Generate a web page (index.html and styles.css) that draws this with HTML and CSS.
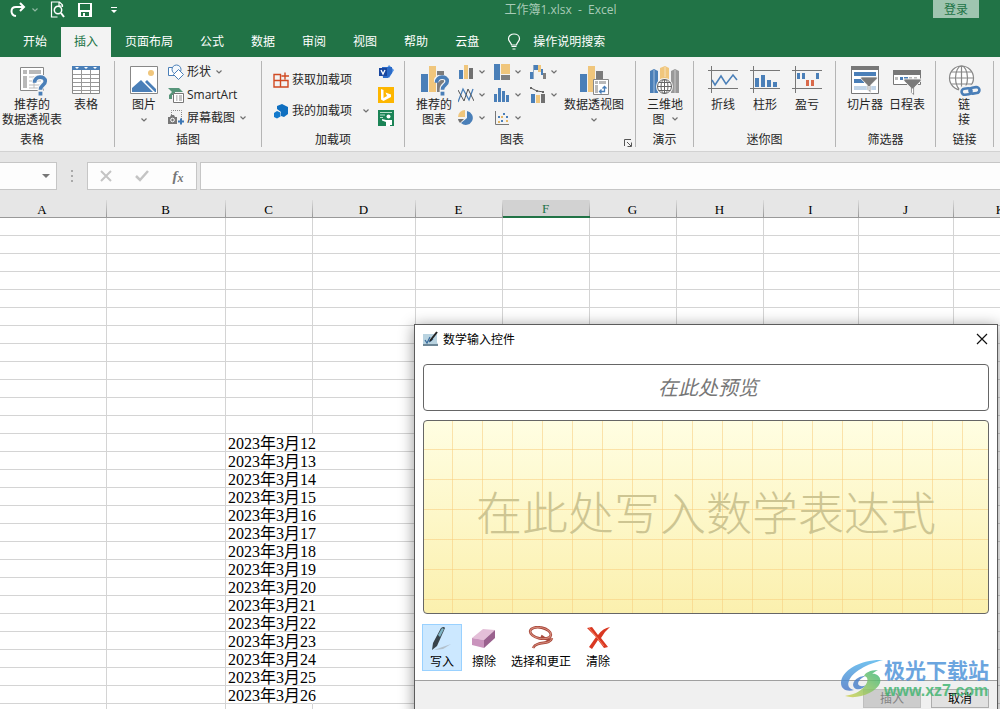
FILE: index.html
```html
<!DOCTYPE html>
<html lang="zh-CN">
<head>
<meta charset="utf-8">
<title>工作簿1.xlsx - Excel</title>
<link rel="stylesheet" href="styles.css">
</head>
<body>
<svg class="defs" aria-hidden="true">
  <symbol id="chev" viewBox="0 0 6 4"><path d="M.5.5 3 3 5.5.5" fill="none" stroke="currentColor" stroke-width="1.2"/></symbol>
  <symbol id="bars" viewBox="0 0 30 32"><path fill="#4a7fb8" d="M1 10h7v18H1z"/><path fill="#f0c67c" d="M9 2h7v26H9z"/><path fill="#7c7c7c" d="M17 7h7v21h-7z"/></symbol>
  <symbol id="question" viewBox="0 0 16 22"><path d="M2 7.500c0-7 11.500-7 11.500-1 0 4-5 4-5 8.500v6" fill="none" stroke="#f3f3f3" stroke-width="6"/><path d="M2.300 8c0-7.500 11.200-7.500 11.200-1.500 0 4.500-5 4-5 9" fill="none" stroke="#4a7fb8" stroke-width="3.800"/><path fill="#4a7fb8" d="M6.500 17.500h4v4h-4z"/></symbol>
  <symbol id="funnel" viewBox="0 0 20 20"><path d="M1 1h18v2l-7 7v9l-4-4v-5L1 3z" fill="#7a7a7a" stroke="#f3f3f3"/><path d="M10 11v5" stroke="#fff" stroke-width="1.500"/></symbol>
</svg>

<header class="top">
  <div class="titlebar">
    <div class="quick">
      <button aria-label="恢复"><svg width="16" height="16" viewBox="0 0 16 16"><path d="M6 14C0 13 0 5 6 5h8M10 1l4 4-4 4" fill="none" stroke="#fff" stroke-width="2"/></svg></button>
      <button class="dim" aria-label="恢复选项"><svg width="6" height="4"><use href="#chev"/></svg></button>
      <button aria-label="打印预览"><svg width="16" height="18" viewBox="0 0 16 18"><path d="M12.500 6V4l-3-3h-8v15h6M9 1v4h3.500" fill="none" stroke="#fff" stroke-width="1.200"/><circle cx="8" cy="9" r="3.700" fill="none" stroke="#fff" stroke-width="1.500"/><path d="m11 12 3 4" stroke="#fff" stroke-width="2"/></svg></button>
      <button aria-label="保存"><svg width="14" height="14" viewBox="0 0 14 14"><path d="M0 0h14v14H0zM2 1v6h10V1zM3 9v4h2v-3h2v3h4V9z" fill="#fff" fill-rule="evenodd"/></svg></button>
      <button aria-label="自定义快速访问工具栏"><svg width="6" height="7" viewBox="0 0 6 7"><path d="M0 0h6v1H0zM0 3h6L3 6z" fill="#fff"/></svg></button>
    </div>
    <div class="doc">工作簿1.xlsx &nbsp;-&nbsp; Excel</div>
    <button class="login">登录</button>
  </div>
  <nav class="tabs">
    <button>开始</button><button class="active">插入</button><button>页面布局</button><button>公式</button><button>数据</button><button>审阅</button><button>视图</button><button>帮助</button><button>云盘</button>
    <button class="tell"><svg width="14" height="17" viewBox="0 0 14 17"><path d="M4.500 12C4 9 1.500 8.500 1.500 5.800c0-6.400 11-6.400 11 0C12.500 8.500 10 9 9.500 12zM4.500 13.500h5M5.500 16h3" fill="none" stroke="#fff" stroke-width="1.200"/></svg>操作说明搜索</button>
  </nav>
</header>

<section class="ribbon">
  <div class="group g-table">
    <div class="tools">
      <button class="big w64"><svg width="32" height="32" viewBox="0 0 32 32"><path d="M4.500 3.500h23v23h-23z" fill="#fff" stroke="#888"/><path d="M7 6h4v4H7zM13 6h12v4H13zM7 12h4v12H7z" fill="#b9b9b9"/><path d="M13 13h12M13 17h12M13 21h12M13 24h12M18 12v12" stroke="#bbb"/><use href="#question" x="16" y="11" width="16" height="21"/></svg>推荐的<br>数据透视表</button>
      <button class="big w44"><svg width="32" height="32" viewBox="0 0 32 32"><path d="M2.500 2.500h27v27h-27z" fill="#fff" stroke="#888"/><path d="M2 2h28v4H2z" fill="#4a7fb8"/><path d="M3 10.500h26M3 14.500h26M3 18.500h26M3 22.500h26M3 26.500h26M11.500 6v23M20.500 6v23" stroke="#999"/><path d="M5 3h4L7 5zM14 3h4l-2 2zM23 3h4l-2 2z" fill="#fff"/></svg>表格</button>
    </div>
    <div class="name">表格</div>
  </div>
  <div class="group g-illus">
    <div class="tools">
      <button class="big w44"><svg width="32" height="32" viewBox="0 0 32 32"><path d="M2.500 2.500h27v27h-27z" fill="#fff" stroke="#888"/><circle cx="23" cy="9" r="3" fill="#f0c67c"/><path d="M4 28V24l9-8 12 12zM17 18l2-2 9 9v3h-1z" fill="#4a7fb8"/></svg>图片<svg class="drop" width="6" height="4"><use href="#chev"/></svg></button>
      <div class="stack">
        <button class="row"><svg width="16" height="16" viewBox="0 0 16 16"><path d="M.5 3.500h8v8h-8z" fill="#fff" stroke="#4a7fb8"/><circle cx="8.500" cy="5.500" r="4.500" fill="#f3f8fd" stroke="#4a7fb8"/><path d="m10.500 5.500 5 5-5 5-5-5z" fill="#fff" stroke="#4a7fb8"/></svg>形状<svg class="chev" width="6" height="4"><use href="#chev"/></svg></button>
        <button class="row"><svg width="16" height="16" viewBox="0 0 16 16"><path d="M0 1h11l4 4H7v3H4v4H1V8l3-3z" fill="#57957a"/><path d="M5.500 6.500h10v9h-10z" fill="#fff" stroke="#777"/><path d="M8 9h1.500M11 9h3M8 11h1.500M11 11h3M8 13h1.500M11 13h3" stroke="#888"/></svg>SmartArt</button>
        <button class="row"><svg width="16" height="16" viewBox="0 0 16 16"><path d="M3.500 5V.5h10V9" fill="none" stroke="#888" stroke-dasharray="1 1"/><path d="M0 7h2l1-2h3l1 2h2v7H0z" fill="#777"/><circle cx="4.500" cy="10" r="1.800" fill="none" stroke="#fff"/><path d="M10 11.500h6M13 8.500v6" stroke="#3e78b5" stroke-width="2"/></svg>屏幕截图<svg class="chev" width="6" height="4"><use href="#chev"/></svg></button>
      </div>
    </div>
    <div class="name">插图</div>
  </div>
  <div class="group g-addin">
    <div class="tools">
      <div class="stack addins">
        <button class="row"><svg width="16" height="16" viewBox="0 0 16 16"><path d="M1 2.500h6.500v12.500H1zM1 8.500h14V15H7.500M12 .500v7M8.500 4H16" fill="none" stroke="#d04a22" stroke-width="1.400"/></svg>获取加载项</button>
        <button class="row"><svg width="16" height="16" viewBox="0 0 16 16"><path d="m9 1 6 3v7l-4 3-3-1V9L4 6V3z" fill="#0f6fc0"/><path d="m4 8 3.500 1.500v4L4 15.500 1 14v-4z" fill="#1279cc"/></svg>我的加载项<svg class="chev far" width="6" height="4"><use href="#chev"/></svg></button>
      </div>
      <div class="stack">
        <button class="row" aria-label="Visio"><svg width="16" height="16" viewBox="0 0 16 16"><path d="m11 1 5 5-5 8-5-6z" fill="#4f8ee0"/><path d="M4 3h10v6l-4 5H5z" fill="#2b6bc8"/><path d="M1 4h8v8H1z" fill="#1847a0"/><path d="m3 6 2 4 2-4" fill="none" stroke="#fff" stroke-width="1.300"/></svg></button>
        <button class="row" aria-label="必应地图"><svg width="16" height="16" viewBox="0 0 16 16"><path d="M0 0h16v16H0z" fill="#fdb600"/><path d="m3 2 2.500 1v8l3.500-2-1.500-3.500L13 7.500v2.500l-7.500 4L3 12.500z" fill="#fff"/></svg></button>
        <button class="row" aria-label="人物图"><svg width="16" height="16" viewBox="0 0 16 16"><path d="M0 0h16v16H0z" fill="#1b8456"/><path d="M2 2.500h12M2 5h5M2 7.500h3" stroke="#b8e0cb"/><circle cx="10.500" cy="6.500" r="2" fill="#fff"/><path d="m4 9 4 1h6v5h-2v1H8v-4L4 10.500z" fill="#fff"/></svg></button>
      </div>
    </div>
    <div class="name">加载项</div>
  </div>
  <div class="group g-chart">
    <div class="tools">
      <button class="big w44"><svg width="32" height="32" viewBox="0 0 32 32"><use href="#bars" x="2" y="0" width="30" height="32"/><use href="#question" x="16" y="11" width="16" height="21"/></svg>推荐的<br>图表</button>
      <div class="minis">
        <button aria-label="柱形图"><svg width="16" height="16" viewBox="0 0 16 16"><path d="M1 6h4v9H1z" fill="#4a7fb8"/><path d="M6 1h4v14H6z" fill="#f0c67c"/><path d="M11 4h4v11h-4z" fill="#707070"/></svg><svg width="6" height="4"><use href="#chev"/></svg></button>
        <button aria-label="层次结构图"><svg width="16" height="16" viewBox="0 0 16 16"><path d="M0 0h6v16H0z" fill="#4a7fb8"/><path d="M7 0h9v10H7z" fill="#f0c67c"/><path d="M7 11h9v5H7z" fill="#808080"/></svg><svg width="6" height="4"><use href="#chev"/></svg></button>
        <button aria-label="瀑布图"><svg width="16" height="16" viewBox="0 0 16 16"><path d="M0 8h3v7H0zM4 1h4v5H4z" fill="#4a7fb8"/><path d="M8 1h3v7H8z" fill="#f0c67c"/><path d="M3 1h1v14H3z" fill="#8fa9c4"/><path d="M11 5h2v6h-2z" fill="#4a7fb8"/><path d="M13 9h3v6h-3z" fill="#808080"/></svg><svg width="6" height="4"><use href="#chev"/></svg></button>
        <button aria-label="折线图"><svg width="16" height="16" viewBox="0 0 16 16"><path d="M0 15 5 2l6 11 4-11" fill="none" stroke="#4a7fb8" stroke-width="1.300"/><path d="m0 3 6 11 4-12 6 12" fill="none" stroke="#555"/></svg><svg width="6" height="4"><use href="#chev"/></svg></button>
        <button aria-label="统计图"><svg width="16" height="16" viewBox="0 0 16 16"><path d="M0 7h3v8H0zM4 1h3v14H4zM8 4h3v11H8zM12 8h3v7h-3z" fill="#4a7fb8"/></svg><svg width="6" height="4"><use href="#chev"/></svg></button>
        <button aria-label="组合图"><svg width="16" height="16" viewBox="0 0 16 16"><path d="M1 7h4v9H1z" fill="#4a7fb8"/><path d="M6 8h4v8H6z" fill="#f0c67c"/><path d="M11 7h4v9h-4z" fill="#707070"/><path d="m1 1 6 3 7 1" fill="none" stroke="#555"/><path d="M0 0h2v2H0zM6 3h2v2H6zM12 4h2v2h-2z" fill="#666"/></svg><svg width="6" height="4"><use href="#chev"/></svg></button>
        <button aria-label="饼图"><svg width="16" height="16" viewBox="0 0 16 16"><path d="M9 1a7 7 0 1 1-6 12l6-5z" fill="#4a7fb8"/><path d="M7 0v7H0a7 7 0 0 1 7-7z" fill="#f0c67c"/><path d="M0 9h6l-4 4a7 7 0 0 1-2-4z" fill="#707070"/></svg><svg width="6" height="4"><use href="#chev"/></svg></button>
        <button aria-label="散点图"><svg width="16" height="16" viewBox="0 0 16 16"><path d="M1.500 1v13.500H15" fill="none" stroke="#777"/><path d="M4 6h2v2H4zM9 3h2v2H9zM7 10h2v2H7zM12 6h2v2h-2z" fill="#4a7fb8"/><path d="M4 11h2v2H4zM7 6h2v2H7zM12 10h2v2h-2z" fill="#e5b765"/></svg><svg width="6" height="4"><use href="#chev"/></svg></button>
      </div>
      <button class="big w64 pivot"><svg width="32" height="32" viewBox="0 0 32 32"><use href="#bars" x="1" y="0" width="30" height="32"/><path d="M15.500 15.500h15v15h-15z" fill="#fff" stroke="#888"/><path d="M17 17h3v3h-3zM21 17h7v3h-7zM17 21h3v8h-3z" fill="#b9b9b9"/><path d="M21.500 27.500h5v-5M23.500 25.500l-2 2 2 2M24.500 24.500l2-2 2 2" fill="none" stroke="#4a7fb8" stroke-width="1.300"/></svg>数据透视图<svg class="drop" width="6" height="4"><use href="#chev"/></svg></button>
    </div>
    <div class="name">图表</div>
    <button class="launch" aria-label="查看所有图表"><svg width="8" height="8" viewBox="0 0 8 8"><path d="M.5 7V.5H7M3 3l4 4M7.500 3.500v4h-4" fill="none" stroke="#555"/></svg></button>
  </div>
  <div class="group g-map">
    <div class="tools">
      <button class="big w44"><svg width="32" height="32" viewBox="0 0 32 32"><path d="m1 7 4-2 4 2v22H1z" fill="#4a7fb8"/><path d="m11 4 5-2 4 2v20h-9z" fill="#f0c67c"/><path d="m22 7 4-2 4 2v22h-8z" fill="#999"/><path d="M5 6v23M26 6v23M16 3v10" stroke="#fff" opacity=".5"/><circle cx="15.500" cy="22.500" r="8.500" fill="#f3f3f3"/><g fill="#fff" stroke="#666"><circle cx="15.500" cy="22.500" r="7"/><ellipse cx="15.500" cy="22.500" rx="3.500" ry="7"/><path d="M8 22.500h15M9.500 18.500h12M9.500 26.500h12M15.500 15v15" fill="none"/></g></svg>三维地<br>图 <svg class="chev" width="6" height="4"><use href="#chev"/></svg></button>
    </div>
    <div class="name">演示</div>
  </div>
  <div class="group g-spark">
    <div class="tools">
      <button class="big w42"><svg width="32" height="32" viewBox="0 0 32 32"><path d="M4.500 2v27M1 6.500h30M1 24.500h30" stroke="#777"/><path d="m5 16 3 5 6-9 5 8 7-9 4 5" fill="none" stroke="#4a7fb8" stroke-width="1.500"/></svg>折线</button>
      <button class="big w42"><svg width="32" height="32" viewBox="0 0 32 32"><path d="M4.500 2v27M1 6.500h30M1 24.500h30" stroke="#777"/><path d="M6 14h4v9H6zM12 11h4v12h-4zM18 16h4v7h-4zM24 18h4v5h-4z" fill="#4a7fb8"/></svg>柱形</button>
      <button class="big w42"><svg width="32" height="32" viewBox="0 0 32 32"><path d="M4.500 2v27M1 6.500h30M1 24.500h30" stroke="#777"/><path d="M6 9h3v6H6zM11 9h3v6h-3zM25 9h3v6h-3z" fill="#4a7fb8"/><path d="M15 16h3v6h-3zM20 16h3v6h-3z" fill="#d9694a"/></svg>盈亏</button>
    </div>
    <div class="name">迷你图</div>
  </div>
  <div class="group g-filter">
    <div class="tools">
      <button class="big w42"><svg width="32" height="32" viewBox="0 0 32 32"><path d="M2.500 2.500h27v27h-27z" fill="#fff" stroke="#777"/><path d="M2 2h28v4H2z" fill="#777"/><path d="M5 8h22v4H5zM5 15h10v4H5z" fill="#4a7fb8"/><path d="M5 22h22v4H5z" fill="#c0d4e8"/><use href="#funnel" x="11" y="12" width="18" height="18"/></svg>切片器</button>
      <button class="big w42"><svg width="32" height="32" viewBox="0 0 32 32"><path d="M2.500 6.500h27v14h-27z" fill="#fff" stroke="#777"/><path d="M2 6h28v5H2z" fill="#777"/><path d="M4 13h3v3H4zM18 13h3v3h-3zM23 13h3v3h-3z" fill="#bbb"/><path d="M9 13h3v3H9zM13 13h4v3h-4z" fill="#4a7fb8"/><use href="#funnel" x="12" y="14" width="19" height="19"/></svg>日程表</button>
    </div>
    <div class="name">筛选器</div>
  </div>
  <div class="group g-link">
    <div class="tools">
      <button class="big w42"><svg width="32" height="32" viewBox="0 0 32 32"><g fill="none" stroke="#888" stroke-width="1.200"><circle cx="13.500" cy="14" r="12" fill="#fff"/><ellipse cx="13.500" cy="14" rx="6" ry="12"/><path d="M1.500 14h24M3.500 8h20M3.500 20h20M13.500 2v24"/></g><g transform="rotate(-8 22 27)" fill="none"><g stroke="#f3f3f3" stroke-width="6"><rect x="13.500" y="24" width="10" height="6" rx="3"/><rect x="21.500" y="24" width="10" height="6" rx="3"/></g><g stroke="#4a7fb8" stroke-width="2.600"><rect x="13.500" y="24" width="10" height="6" rx="3"/><rect x="21.500" y="24" width="10" height="6" rx="3"/></g></g></svg>链<br>接</button>
    </div>
    <div class="name">链接</div>
  </div>
</section>

<section class="formula">
  <button class="namebox" aria-label="名称框"><svg width="8" height="5" viewBox="0 0 8 5"><path d="M0 0h8L4 4z" fill="#777"/></svg></button>
  <svg class="dots" width="2" height="12" viewBox="0 0 2 12"><path d="M0 0h2v2H0zM0 5h2v2H0zM0 10h2v2H0z" fill="#aaa"/></svg>
  <div class="fxbox">
    <button aria-label="取消"><svg width="12" height="12" viewBox="0 0 12 12"><path d="m1 1 10 10M11 1 1 11" stroke="#c4c4c4" stroke-width="2"/></svg></button>
    <button aria-label="输入"><svg width="14" height="12" viewBox="0 0 14 12"><path d="m1 6 4 4 8-9" fill="none" stroke="#c4c4c4" stroke-width="2.500"/></svg></button>
    <button class="fx" aria-label="插入函数"><i>f</i><i class="x">x</i></button>
  </div>
  <input class="fbar" type="text" aria-label="编辑栏">
</section>

<main class="sheet">
  <table class="grid">
    <colgroup><col class="c128"><col class="c119"><col class="c87"><col class="c103"><col class="c87"><col class="c87"><col class="c87"><col class="c87"><col class="c95"><col class="c95"><col class="c95"></colgroup>
    <thead><tr><th>A</th><th>B</th><th>C</th><th>D</th><th>E</th><th class="sel">F</th><th>G</th><th>H</th><th>I</th><th>J</th><th>K</th></tr></thead>
    <tbody id="rows"></tbody>
  </table>
</main>

<div class="dialog" role="dialog" aria-labelledby="dlg-title">
  <div class="caption">
    <svg width="17" height="16" viewBox="0 0 17 16"><path d="M1 3h11l4 11H1z" fill="#9dbccd"/><path d="M1 3h14v10H1z" fill="#b9d3e0"/><path d="M1 13h15v2H1z" fill="#6d8797"/><path d="m3 9 2 3 3-6M7 11l4-3" fill="none" stroke="#36699a" stroke-width="1.200"/><path d="m8 10 7-9" stroke="#222" stroke-width="2"/></svg>
    <h1 id="dlg-title">数学输入控件</h1>
    <button aria-label="关闭"><svg width="12" height="12" viewBox="0 0 12 12"><path d="m1 1 10 10M11 1 1 11" stroke="#111" stroke-width="1.200"/></svg></button>
  </div>
  <div class="preview">在此处预览</div>
  <div class="canvas">在此处写入数学表达式</div>
  <div class="modes">
    <button class="on"><svg width="26" height="26" viewBox="0 0 26 26"><path d="m5 24 17-6-8 5z" fill="#999" opacity=".5"/><path d="m4 17 8-15q3-2 4 0L8 20l-5 4z" fill="#38434a"/><path d="m9 9 4-7 2 1-4 8z" fill="#7eb4c5"/></svg>写入</button>
    <button><svg width="26" height="26" viewBox="0 0 26 26"><path d="m1 12 11-9 12 1-11 10z" fill="#e4bfd8"/><path d="m1 12 12 2v8L1 19z" fill="#ca94bd"/><path d="m13 14 11-10v8L13 22z" fill="#9a618e"/></svg>擦除</button>
    <button class="wide"><svg width="26" height="26" viewBox="0 0 26 26"><g fill="none" stroke="#a8493c" stroke-width="2.600"><ellipse cx="12.500" cy="7" rx="10.500" ry="5.500" transform="rotate(12 12.500 7)"/><path d="M24 13c-4 3-7-1-11-3M24 12c-2 6-9 4-14 6-3 1-4 2-5 4"/></g><g fill="none" stroke="#d98e7e"><ellipse cx="12.500" cy="7" rx="10.500" ry="5.500" transform="rotate(12 12.500 7)"/><path d="M24 12c-2 6-9 4-14 6-3 1-4 2-5 4"/></g></svg>选择和更正</button>
    <button><svg width="26" height="26" viewBox="0 0 26 26"><path d="m2 2 5-1 6 8q5-7 12-8-5 4-9 11l7 9-4 1-6-8-6 9-3-2 7-10z" fill="#d93822"/><path d="m4 2 15 18" stroke="#f47b5c"/></svg>清除</button>
  </div>
  <div class="actions"><button disabled>插入</button><button>取消</button></div>
</div>

<div class="mark">
  <svg width="44" height="40" viewBox="0 0 44 40"><defs><linearGradient id="ma" x2="0" y2="1"><stop stop-color="#53b5ec"/><stop offset="1" stop-color="#4a78c8"/></linearGradient><linearGradient id="mb" x1="1" x2="0" y2="1"><stop stop-color="#35b67a"/><stop offset="1" stop-color="#d7d34f"/></linearGradient></defs><path d="M43 1C22 0 1 11 1 24c0 7 7 9 13 7-5-1-7-5-5-9C12 13 27 5 43 1z" fill="url(#ma)"/><path d="M25 17c-9 0-16 9-9 13 4 1 8-1 10-4-5 3-10 0-7-4 1-2 4-4 6-5z" fill="#477fca"/><path d="M24 17c7 1 3 12-8 17-5 2-9 2-11 3 12 4 31-3 35-13 2-7-5-10-8-9 2-2 4-3 6-4-8 0-13 3-14 6z" fill="url(#mb)"/></svg>
  <div class="words"><b>极光下载站</b><strong>www.xz7.com</strong></div>
</div>
<script src="rows.js"></script>
</body>
</html>
```
FILE: styles.css
```css
* { box-sizing: border-box; }
body {
  margin: 0;
  height: 100vh;
  overflow: hidden;
  position: relative;
  display: flex;
  flex-direction: column;
  background: #fff;
  color: #262626;
  font: 12px/15px "Open Sans", "Noto Sans CJK SC", sans-serif;
}
button { font: inherit; color: inherit; background: none; border: 0; padding: 0; margin: 0; }
svg { display: block; flex: none; }
.defs { position: absolute; width: 0; height: 0; }

.top { background: #217346; color: #fff; flex: none; }
.titlebar { display: grid; grid-template-columns: 1fr auto 1fr; height: 27px; align-items: start; }
.quick { display: flex; align-items: center; height: 20px; padding-left: 10px; }
.quick button { margin-right: 12px; }
.quick button:first-child { margin-right: 6px; }
.quick button:nth-child(4) { margin-right: 19px; }
.dim { opacity: .5; }
.doc { padding: 2px 0 0 121px; color: #a8cbb7; white-space: nowrap; }
.login { justify-self: end; width: 46px; height: 18px; margin-right: 21px; background: #9fc5b0; color: #217346; }
.tabs { display: flex; gap: 1px; padding-left: 10px; height: 30px; border-bottom: 1px solid #217346; }
.tabs button { padding: 0 13px; height: 28px; }
.tabs .active { background: #f3f3f3; color: #217346; height: 30px; padding-bottom: 2px; }
.tabs .tell { display: flex; align-items: center; gap: 12px; padding-left: 14px; }

.ribbon { display: flex; flex: none; height: 95px; padding: 4px 0; background: #f3f3f3; border-bottom: 1px solid #d2d2d2; overflow: hidden; }
.group { position: relative; flex: none; display: flex; flex-direction: column; border-right: 1px solid #b5b5b5; }
.tools { display: flex; height: 72px; align-items: flex-start; }
.name { text-align: center; }
.big { display: block; padding-top: 3px; white-space: nowrap; text-align: center; flex: none; }
.big > svg:first-child { margin: 0 auto 1px; overflow: visible; }
.big .drop { margin: 6px auto 0; }
.big .chev { display: inline-block; margin: 0 0 3px 4px; }
.drop, .chev, .minis svg:last-child { color: #707070; }
.w64 { width: 64px; }
.w44 { width: 44px; }
.w42 { width: 42px; }
.stack { display: flex; flex-direction: column; }
.row { display: flex; align-items: center; gap: 3px; height: 23px; white-space: nowrap; }
.row .chev { margin-left: 2px; }
.row .far { margin-left: 8px; }
.g-table { width: 165px; margin-left: -50px; padding-left: 50px; }
.g-table .name { margin-left: -50px; }
.g-illus { width: 147px; }
.g-illus .tools { padding-left: 7px; gap: 2px; }
.g-illus .stack, .g-addin .stack { margin-top: -1px; }
.g-addin { width: 143px; }
.g-addin .tools { padding-left: 11px; gap: 9px; }
.g-addin .addins { padding-top: 4px; }
.addins .row { height: 31px; }
.g-chart { width: 231px; }
.g-chart .tools { padding-left: 7px; gap: 2px; }
.g-chart .name { padding-right: 16px; }
.minis { display: grid; grid-template-columns: repeat(3, 36px); grid-auto-rows: 23px; margin-top: -1px; }
.minis button { display: flex; align-items: center; gap: 5px; }
.pivot { margin-left: -6px; }
.launch { position: absolute; right: 3px; bottom: 0; }
.g-map { width: 58px; }
.g-map .tools, .g-link .tools { padding-left: 7px; }
.g-spark { width: 142px; }
.g-spark .tools { padding-left: 8px; }
.g-filter { width: 100px; }
.g-filter .tools { padding-left: 8px; }
.g-link { width: 58px; }

.formula { display: flex; flex: none; align-items: center; height: 48px; background: #e6e6e6; }
.formula > button, .fxbox, .fbar { height: 28px; background: #fdfdfd; border: 1px solid #c6c6c6; }
.formula > .namebox { width: 57px; border-left: 0; display: flex; align-items: center; justify-content: flex-end; padding-right: 6px; }
.dots { margin: 0 14px; }
.fxbox { display: flex; align-items: center; width: 110px; margin-right: 3px; }
.fxbox button { flex: 1; display: flex; justify-content: center; align-items: center; }
.fxbox .fx { font: bold 15px/18px "Liberation Serif", serif; color: #777; }
.fx .x { font-size: 12px; padding-top: 4px; }
.fbar { flex: 1; min-width: 0; border-right: 0; padding: 0 6px; font: inherit; }

.sheet { flex: 1; min-height: 0; overflow: hidden; }
.grid { table-layout: fixed; width: 1070px; margin-left: -21px; border-spacing: 0; font-family: "Liberation Serif", "Noto Sans CJK SC", serif; color: #000; }
.c87 { width: 87px; }
.c95 { width: 95px; }
.c103 { width: 103px; }
.c119 { width: 119px; }
.c128 { width: 128px; }
.grid th { height: 18px; padding: 2px 2px 0 0; font-size: 13px; line-height: 15px; font-weight: normal; background: linear-gradient(#dcdcdc, #999) right / 1px 100% no-repeat #e6e6e6; border-bottom: 1px solid #999; }
.grid .sel { background-color: #d2d2d2; color: #217346; border-bottom: 2px solid #217346; line-height: 14px; }
.grid td { height: 18px; padding: 2px 0 0 2px; border-right: 1px solid #d4d4d4; border-bottom: 1px solid #d4d4d4; font-size: 16px; line-height: 15px; white-space: nowrap; overflow: visible; }
.grid .spill { border-right-color: transparent; }

.dialog { position: absolute; left: 414px; right: 2px; top: 324px; background: #fff; border: 1px solid #5c5c5c; box-shadow: 0 2px 14px rgba(0, 0, 0, .42); color: #000; }
.caption { display: flex; align-items: center; gap: 4px; height: 28px; margin-bottom: 11px; padding: 0 9px 0 7px; }
.caption h1 { flex: 1; margin: 0; font: inherit; }
.preview, .canvas { margin: 0 8px; border: 1px solid #666; border-radius: 4px; display: flex; align-items: center; justify-content: center; }
.preview { height: 47px; padding-left: 4px; font-size: 20px; line-height: 28px; font-style: italic; color: #777; }
.canvas {
  height: 194px;
  margin-top: 9px;
  padding-bottom: 10px;
  background:
    linear-gradient(90deg, rgba(248, 205, 125, .55) 1px, transparent 1px) 28px 0 / 30px 30px,
    linear-gradient(rgba(248, 205, 125, .55) 1px, transparent 1px) 0 28px / 30px 30px,
    linear-gradient(#fffee2, #fbf0ae);
  color: #cdc592;
  font-size: 46px;
  font-weight: 300;
  line-height: 60px;
  white-space: nowrap;
}
.modes { display: flex; gap: 2px; padding: 10px 7px 9px; }
.modes button { width: 40px; height: 47px; display: flex; flex-direction: column; align-items: center; gap: 2px; padding-top: 1px; border: 1px solid transparent; white-space: nowrap; }
.modes .wide { width: 70px; }
.modes .on { background: #cce8ff; border-color: #99d1ff; }
.actions { display: flex; justify-content: flex-end; gap: 10px; padding: 8px 8px 10px; background: #f0f0f0; border-top: 1px solid #a0a0a0; }
.actions button { width: 58px; height: 19px; line-height: 17px; background: #e1e1e1; border: 1px solid #adadad; }
.actions button:disabled { background: #ccc; border-color: #bfbfbf; color: #838383; }

.mark { position: absolute; right: 10px; bottom: 8px; display: flex; align-items: flex-start; opacity: .82; pointer-events: none; }
.words { display: flex; flex-direction: column; width: 106px; white-space: nowrap; }
.words b { font-size: 21px; line-height: 22px; color: #4b92d8; }
.words strong { font: bold 16px/20px "Liberation Sans", sans-serif; color: #3fb56f; }
```
FILE: rows.js
```js
const body = document.getElementById('rows');
const firstDataRow = 12;
for (let r = 0; r < 28; r++) {
  const tr = document.createElement('tr');
  for (let c = 0; c < 11; c++) {
    const td = document.createElement('td');
    if (c === 2 && r >= firstDataRow && r < 27) {
      td.textContent = '2023年3月' + r;
      td.className = 'spill';
    }
    tr.append(td);
  }
  body.append(tr);
}
```
